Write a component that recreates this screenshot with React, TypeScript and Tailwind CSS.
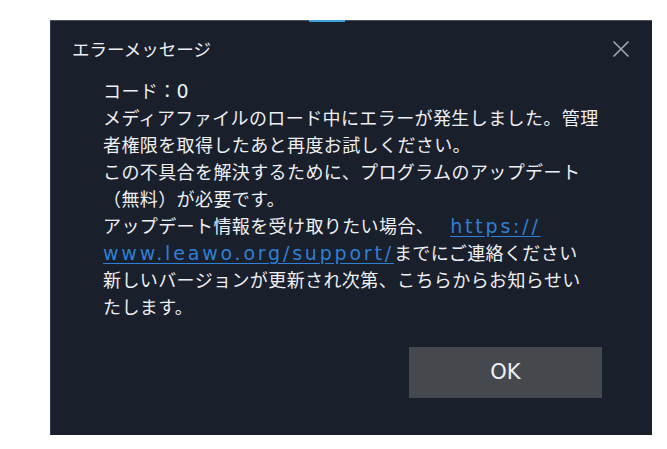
function CloseIcon() {
  return (
    <svg width="18" height="18" viewBox="0 0 18 18" fill="none">
      <path d="M1.5 1.5 L16.5 16.5 M16.5 1.5 L1.5 16.5" stroke="#a3a7ae" strokeWidth="1.6" />
    </svg>
  );
}

// Latin runs are drawn wider, like Meiryo's Verdana-style letters
function Latin({ children, link, className = "" }: { children: React.ReactNode; link?: boolean; className?: string }) {
  return (
    <span
      className={
        (link
          ? "font-['DejaVu_Sans',sans-serif] text-[19px] leading-none tracking-[2.8px] text-[#2f7fd6] underline underline-offset-[3px] "
          : "font-['DejaVu_Sans',sans-serif] text-[19px] leading-none tracking-[1px] ") + className
      }
    >
      {children}
    </span>
  );
}

export default function App() {
  return (
    <div className="min-h-screen bg-white pl-[50px] pt-5 font-['Noto_Sans_CJK_JP',sans-serif]">
      <div className="relative flex h-[415px] w-[602px] flex-col border-t border-l border-t-[#4a5163] border-l-[#2b3f60] bg-[#191f2b] text-[#eef0f3]">
        {/* little blue marker on top edge */}
        <div className="absolute -top-px left-[258px] h-[2px] w-9 bg-[#3ea2dc]" />

        <div className="flex items-center justify-between pl-[21px] pr-[22px] pt-4">
          <span className="text-[17.5px] leading-6">エラーメッセージ</span>
          <CloseIcon />
        </div>

        <div className="mt-4 pl-[52px] text-[18px] leading-[27px] tracking-[0.4px]">
          <div>
            コード：<Latin>0</Latin>
          </div>
          <div>メディアファイルのロード中にエラーが発生しました。管理</div>
          <div>者権限を取得したあと再度お試しください。</div>
          <div>この不具合を解決するために、プログラムのアップデート</div>
          <div>（無料）が必要です。</div>
          <div>
            アップデート情報を受け取りたい場合、
            <Latin link className="ml-[16px]">
              https://
            </Latin>
          </div>
          <div>
            <Latin link>www.leawo.org/support/</Latin>までにご連絡ください
          </div>
          <div>新しいバージョンが更新され次第、こちらからお知らせい</div>
          <div>たします。</div>
        </div>

        <div className="mt-[27px] flex justify-end pr-[50px]">
          <button className="h-[51px] w-[193px] bg-[#45484d] font-['DejaVu_Sans',sans-serif] text-[21px] text-[#eef0f3]">
            OK
          </button>
        </div>
      </div>
    </div>
  );
}
